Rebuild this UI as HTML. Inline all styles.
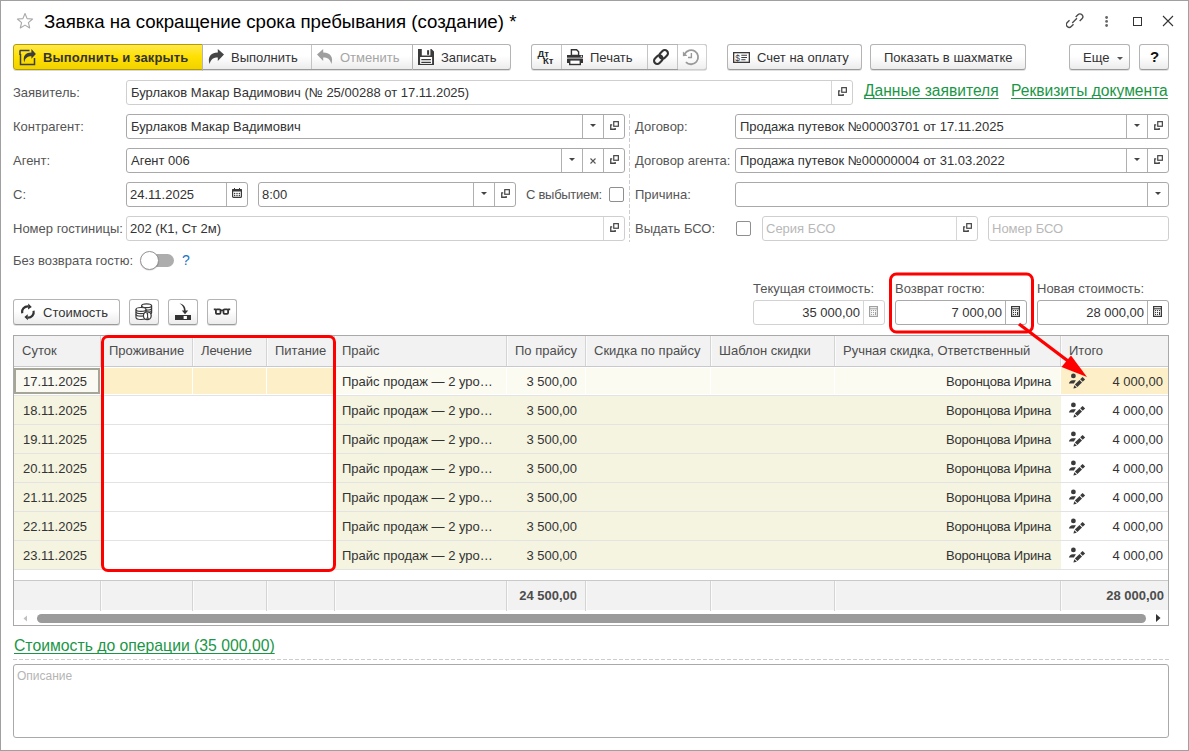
<!DOCTYPE html><html><head><meta charset="utf-8"><style>
*{margin:0;padding:0}
html,body{width:1189px;height:751px;overflow:hidden;background:#fff}
body{position:relative;font-family:"Liberation Sans", sans-serif}
.t{position:absolute;white-space:nowrap;line-height:0;height:0}
.btn{border:1px solid #b4b4b4;border-bottom-color:#9a9a9a;border-radius:3px;background:linear-gradient(#ffffff 0%,#ffffff 45%,#ececec 100%);box-shadow:0 1px 0 rgba(0,0,0,0.12)}
.inp{border:1px solid #a9a9a9;border-radius:3px;background:#fff}
.inpl{border:1px solid #cfcfcf;border-radius:3px;background:#fff}
</style></head><body>
<div style="position:absolute;left:0px;top:0px;width:1189px;height:751px;box-sizing:border-box;border:1px solid #a0a0a0;"></div>
<svg style="position:absolute;left:16px;top:12px;" width="18" height="18" viewBox="0 0 18 18"><path d="M9 1.5 L11.1 6.6 L16.6 7 L12.4 10.6 L13.7 16 L9 13.1 L4.3 16 L5.6 10.6 L1.4 7 L6.9 6.6 Z" fill="none" stroke="#a9a9a9" stroke-width="1.1" stroke-linejoin="round"/></svg>
<div class="t" style="left:44px;top:22.03px;font-size:18.67px;color:#000;font-weight:400;">Заявка на сокращение срока пребывания (создание) *</div>
<svg style="position:absolute;left:1066px;top:12px;" width="18" height="18" viewBox="0 0 18 18"><g fill="none" stroke="#4a4a4a" stroke-width="1.25" stroke-linecap="butt" transform="translate(8.6 8.6) scale(1.08) translate(-8.5 -8.5)"><path d="M3.8 8.2 L1.7 10.3 A2.6 2.6 0 0 0 5.4 14 L7.5 11.9"/><path d="M13.2 8.8 L15.3 6.7 A2.6 2.6 0 0 0 11.6 3 L9.5 5.1"/><path d="M6.3 10.7 L10.7 6.3"/></g></svg>
<svg style="position:absolute;left:1104px;top:15px;" width="6" height="13" viewBox="0 0 6 13"><g fill="#666"><circle cx="2.6" cy="2.5" r="1.4"/><circle cx="2.6" cy="6.4" r="1.4"/><circle cx="2.6" cy="10.5" r="1.4"/></g></svg>
<div style="position:absolute;left:1133px;top:17px;width:9px;height:9px;box-sizing:border-box;border:1.5px solid #333;"></div>
<svg style="position:absolute;left:1162px;top:15px;" width="12" height="12" viewBox="0 0 12 12"><path d="M1 1 L11 11 M11 1 L1 11" stroke="#333" stroke-width="1.1"/></svg>
<div style="position:absolute;left:13px;top:44px;width:190px;height:26px;box-sizing:border-box;border:1px solid #b39c00;border-radius:3px 0 0 3px;background:linear-gradient(#ffe94d 0%,#ffe000 50%,#f2d200 100%);box-shadow:0 1px 0 rgba(0,0,0,0.15)"></div>
<svg style="position:absolute;left:19px;top:49px;" width="18" height="17" viewBox="0 0 18 17"><path d="M1.5 5 V15.5 H15.5 V9" fill="none" stroke="#3d3d3d" stroke-width="1.5"/><path d="M0.75 1.5 H10.5" stroke="#3d3d3d" stroke-width="1.5"/><path d="M1 1.5 V6" stroke="#3d3d3d" stroke-width="1.5"/><path d="M5.3 13.5 C3.8 8 5.5 3.6 12.4 3.6 V0.1 L16.9 4.9 L12.4 9.7 V7.3 C8.5 7.3 6 9 5.3 13.5 Z" fill="#3d3d3d"/></svg>
<div class="t" style="left:43px;top:57.50px;font-size:13px;color:#333;font-weight:700;letter-spacing:0.12px;">Выполнить и закрыть</div>
<div class="btn" style="border-radius:0 3px 3px 0;position:absolute;left:202px;top:44px;width:309px;height:26px;box-sizing:border-box;"></div>
<div style="position:absolute;left:311px;top:45px;width:1px;height:24px;box-sizing:border-box;background:#c4c4c4"></div>
<div style="position:absolute;left:412px;top:44px;width:1px;height:26px;box-sizing:border-box;background:#b4b4b4"></div>
<svg style="position:absolute;left:207px;top:48px;" width="18" height="17" viewBox="0 0 18 17"><path d="M2.6 16 C0.5 10 3 4.6 10.8 4.6 V0.9 L17 6.5 L10.8 12.9 V9.6 C6.5 9.6 4 11 2.6 16 Z" fill="#454545"/></svg>
<div class="t" style="left:231px;top:57.50px;font-size:13px;color:#333;font-weight:400;">Выполнить</div>
<svg style="position:absolute;left:316px;top:48px;" width="18" height="17" viewBox="0 0 18 17"><path d="M15.4 16 C17.5 10 15 4.6 7.2 4.6 V0.9 L1 6.5 L7.2 12.9 V9.6 C11.5 9.6 14 11 15.4 16 Z" fill="#9e9e9e"/></svg>
<div class="t" style="left:340px;top:57.50px;font-size:13px;color:#a5a5a5;font-weight:400;">Отменить</div>
<svg style="position:absolute;left:418px;top:49px;" width="16" height="16" viewBox="0 0 16 16"><path d="M0 0 H3.8 V6.6 H12.4 V0 H13.4 L16 2.6 V16 H0 Z" fill="#3a3a3a"/><rect x="9.1" y="1.2" width="2" height="4.6" fill="#3a3a3a"/><rect x="2.1" y="8" width="12" height="6.9" fill="#fff"/><path d="M3.3 10.6 H12.9 M3.3 13.4 H12.9" stroke="#3a3a3a" stroke-width="1.1"/></svg>
<div class="t" style="left:441px;top:57.50px;font-size:13px;color:#333;font-weight:400;">Записать</div>
<div class="btn" style="position:absolute;left:531px;top:44px;width:176px;height:26px;box-sizing:border-box;"></div>
<div style="position:absolute;left:561px;top:45px;width:1px;height:24px;box-sizing:border-box;background:#c4c4c4"></div>
<div style="position:absolute;left:647px;top:45px;width:1px;height:24px;box-sizing:border-box;background:#c4c4c4"></div>
<div style="position:absolute;left:677px;top:45px;width:1px;height:24px;box-sizing:border-box;background:#c4c4c4"></div>
<div class="t" style="left:537.5px;top:53.71px;font-size:9.5px;color:#2a2a2a;font-weight:700;">Дт</div>
<div class="t" style="left:543px;top:61.21px;font-size:9.5px;color:#2a2a2a;font-weight:700;">Кт</div>
<svg style="position:absolute;left:566px;top:48px;" width="18" height="18" viewBox="0 0 18 18"><path d="M5.4 1.7 H10.6 L12.6 3.7 V7.5 H5.4 Z" fill="#fff" stroke="#333" stroke-width="1.4"/><rect x="1" y="7" width="16" height="2.7" fill="#333"/><circle cx="15.3" cy="8.35" r="0.75" fill="#fff"/><rect x="1" y="10.4" width="16" height="4.6" rx="0.6" fill="#333"/><rect x="3.7" y="11.9" width="10.6" height="4.6" fill="#fff" stroke="#333" stroke-width="1.4"/></svg>
<div class="t" style="left:590px;top:57.50px;font-size:13px;color:#333;font-weight:400;">Печать</div>
<svg style="position:absolute;left:652px;top:48px;" width="18" height="18" viewBox="0 0 18 18"><g fill="none" stroke="#333" stroke-width="2.1" transform="rotate(-45 9 9)"><rect x="0.5" y="5.8" width="9.5" height="6.4" rx="3.2"/><rect x="8" y="5.8" width="9.5" height="6.4" rx="3.2"/></g></svg>
<div style="position:absolute;left:678px;top:44px;width:29px;height:26px;box-sizing:border-box;border:1px solid #cfcfcf;border-left:none;border-radius:0 3px 3px 0;background:linear-gradient(#ffffff 45%,#efefef 100%)"></div>
<svg style="position:absolute;left:682px;top:48px;" width="18" height="18" viewBox="0 0 18 18"><path d="M3.9 14.1 A7.1 7.1 0 1 0 2.7 5.9" fill="none" stroke="#9a9a9a" stroke-width="1.8"/><path d="M0.9 3.4 L0.9 8.3 L5.4 7.7 Z" fill="#9a9a9a"/><path d="M9.4 5.1 V9.5 H6" fill="none" stroke="#9a9a9a" stroke-width="1.4"/></svg>
<div class="btn" style="position:absolute;left:727px;top:44px;width:135px;height:26px;box-sizing:border-box;"></div>
<svg style="position:absolute;left:733px;top:52px;" width="17" height="11" viewBox="0 0 17 11"><rect x="0.65" y="0.65" width="15.7" height="9.7" fill="none" stroke="#3a3a3a" stroke-width="1.3"/><text x="2.3" y="8.6" font-family="Liberation Sans" font-size="8.5" fill="#3a3a3a">$</text><path d="M8.3 3.2 H14 M8.3 5.5 H14 M8.3 7.8 H12.5" stroke="#3a3a3a" stroke-width="1.1"/></svg>
<div class="t" style="left:757px;top:57.50px;font-size:13px;color:#333;font-weight:400;">Счет на оплату</div>
<div class="btn" style="position:absolute;left:870px;top:44px;width:156px;height:26px;box-sizing:border-box;"></div>
<div class="t" style="left:884px;top:57.50px;font-size:13px;color:#333;font-weight:400;">Показать в шахматке</div>
<div class="btn" style="position:absolute;left:1069px;top:44px;width:61px;height:26px;box-sizing:border-box;"></div>
<div class="t" style="left:1083px;top:57.50px;font-size:13px;color:#333;font-weight:400;">Еще</div>
<svg style="position:absolute;left:1117px;top:57px;" width="6" height="4" viewBox="0 0 6 4"><path d="M0 0 H6 L3 3 Z" fill="#555"/></svg>
<div class="btn" style="position:absolute;left:1139px;top:44px;width:30px;height:26px;box-sizing:border-box;"></div>
<div class="t" style="left:1150px;top:57.30px;font-size:15px;color:#111;font-weight:700;">?</div>
<div class="t" style="left:13px;top:92.50px;font-size:13px;color:#555555;font-weight:400;">Заявитель:</div>
<div style="position:absolute;left:126px;top:80px;width:727px;height:25px;box-sizing:border-box;border:1px solid #cfcfcf;border-radius:3px;background:#fff"></div>
<div style="position:absolute;left:831px;top:81px;width:1px;height:23px;box-sizing:border-box;background:#d6d6d6"></div>
<svg style="position:absolute;left:838px;top:87px;" width="10" height="10" viewBox="0 0 10 10"><path d="M2.2 3.8 H0.75 V8.25 H5.2 V7" fill="none" stroke="#444" stroke-width="1.3"/><rect x="3.75" y="0.65" width="4.6" height="4.6" fill="none" stroke="#444" stroke-width="1.2"/></svg>
<div class="t" style="left:131px;top:92.50px;font-size:13px;color:#333;font-weight:400;">Бурлаков Макар Вадимович (№ 25/00288 от 17.11.2025)</div>
<div class="t" style="left:864px;top:90.59px;font-size:15.6px;color:#1a9646;font-weight:400;text-decoration:underline;text-decoration-skip-ink:none;text-underline-offset:1.5px;">Данные заявителя</div>
<div class="t" style="left:1011px;top:90.59px;font-size:15.6px;color:#1a9646;font-weight:400;text-decoration:underline;text-decoration-skip-ink:none;text-underline-offset:1.5px;">Реквизиты документа</div>
<div class="t" style="left:13px;top:126.50px;font-size:13px;color:#555555;font-weight:400;">Контрагент:</div>
<div style="position:absolute;left:126px;top:114px;width:499px;height:25px;box-sizing:border-box;border:1px solid #a9a9a9;border-radius:3px;background:#fff"></div>
<div style="position:absolute;left:582px;top:115px;width:1px;height:23px;box-sizing:border-box;background:#b0b0b0"></div>
<div style="position:absolute;left:603px;top:115px;width:1px;height:23px;box-sizing:border-box;background:#b0b0b0"></div>
<svg style="position:absolute;left:590px;top:124px;" width="6" height="4" viewBox="0 0 6 4"><path d="M0 0 H6 L3 3 Z" fill="#444"/></svg>
<svg style="position:absolute;left:610px;top:121px;" width="10" height="10" viewBox="0 0 10 10"><path d="M2.2 3.8 H0.75 V8.25 H5.2 V7" fill="none" stroke="#444" stroke-width="1.3"/><rect x="3.75" y="0.65" width="4.6" height="4.6" fill="none" stroke="#444" stroke-width="1.2"/></svg>
<div class="t" style="left:131px;top:126.50px;font-size:13px;color:#333;font-weight:400;">Бурлаков Макар Вадимович</div>
<div class="t" style="left:635px;top:126.50px;font-size:13px;color:#555555;font-weight:400;">Договор:</div>
<div style="position:absolute;left:735px;top:114px;width:434px;height:25px;box-sizing:border-box;border:1px solid #a9a9a9;border-radius:3px;background:#fff"></div>
<div style="position:absolute;left:1126px;top:115px;width:1px;height:23px;box-sizing:border-box;background:#b0b0b0"></div>
<div style="position:absolute;left:1147px;top:115px;width:1px;height:23px;box-sizing:border-box;background:#b0b0b0"></div>
<svg style="position:absolute;left:1134px;top:124px;" width="6" height="4" viewBox="0 0 6 4"><path d="M0 0 H6 L3 3 Z" fill="#444"/></svg>
<svg style="position:absolute;left:1154px;top:121px;" width="10" height="10" viewBox="0 0 10 10"><path d="M2.2 3.8 H0.75 V8.25 H5.2 V7" fill="none" stroke="#444" stroke-width="1.3"/><rect x="3.75" y="0.65" width="4.6" height="4.6" fill="none" stroke="#444" stroke-width="1.2"/></svg>
<div class="t" style="left:740px;top:126.50px;font-size:13px;color:#333;font-weight:400;">Продажа путевок №00003701 от 17.11.2025</div>
<div class="t" style="left:13px;top:160.50px;font-size:13px;color:#555555;font-weight:400;">Агент:</div>
<div style="position:absolute;left:126px;top:148px;width:499px;height:25px;box-sizing:border-box;border:1px solid #a9a9a9;border-radius:3px;background:#fff"></div>
<div style="position:absolute;left:561px;top:149px;width:1px;height:23px;box-sizing:border-box;background:#b0b0b0"></div>
<div style="position:absolute;left:582px;top:149px;width:1px;height:23px;box-sizing:border-box;background:#b0b0b0"></div>
<div style="position:absolute;left:603px;top:149px;width:1px;height:23px;box-sizing:border-box;background:#b0b0b0"></div>
<svg style="position:absolute;left:569px;top:158px;" width="6" height="4" viewBox="0 0 6 4"><path d="M0 0 H6 L3 3 Z" fill="#444"/></svg>
<svg style="position:absolute;left:590px;top:158px;" width="6" height="6" viewBox="0 0 6 6"><path d="M0.5 0.5 L5.5 5.5 M5.5 0.5 L0.5 5.5" stroke="#555" stroke-width="1.1"/></svg>
<svg style="position:absolute;left:610px;top:155px;" width="10" height="10" viewBox="0 0 10 10"><path d="M2.2 3.8 H0.75 V8.25 H5.2 V7" fill="none" stroke="#444" stroke-width="1.3"/><rect x="3.75" y="0.65" width="4.6" height="4.6" fill="none" stroke="#444" stroke-width="1.2"/></svg>
<div class="t" style="left:131px;top:160.50px;font-size:13px;color:#333;font-weight:400;">Агент 006</div>
<div class="t" style="left:635px;top:160.50px;font-size:13px;color:#555555;font-weight:400;">Договор агента:</div>
<div style="position:absolute;left:735px;top:148px;width:434px;height:25px;box-sizing:border-box;border:1px solid #a9a9a9;border-radius:3px;background:#fff"></div>
<div style="position:absolute;left:1126px;top:149px;width:1px;height:23px;box-sizing:border-box;background:#b0b0b0"></div>
<div style="position:absolute;left:1147px;top:149px;width:1px;height:23px;box-sizing:border-box;background:#b0b0b0"></div>
<svg style="position:absolute;left:1134px;top:158px;" width="6" height="4" viewBox="0 0 6 4"><path d="M0 0 H6 L3 3 Z" fill="#444"/></svg>
<svg style="position:absolute;left:1154px;top:155px;" width="10" height="10" viewBox="0 0 10 10"><path d="M2.2 3.8 H0.75 V8.25 H5.2 V7" fill="none" stroke="#444" stroke-width="1.3"/><rect x="3.75" y="0.65" width="4.6" height="4.6" fill="none" stroke="#444" stroke-width="1.2"/></svg>
<div class="t" style="left:740px;top:160.50px;font-size:13px;color:#333;font-weight:400;">Продажа путевок №00000004 от 31.03.2022</div>
<div class="t" style="left:13px;top:194.50px;font-size:13px;color:#555555;font-weight:400;">С:</div>
<div style="position:absolute;left:126px;top:182px;width:122px;height:25px;box-sizing:border-box;border:1px solid #a9a9a9;border-radius:3px;background:#fff"></div>
<div style="position:absolute;left:226px;top:183px;width:1px;height:23px;box-sizing:border-box;background:#b0b0b0"></div>
<svg style="position:absolute;left:232px;top:188px;" width="10" height="10" viewBox="0 0 10 10"><rect x="0.6" y="1.6" width="8.8" height="7.8" rx="1" fill="none" stroke="#3a3a3a" stroke-width="1.2"/><rect x="0" y="1" width="10" height="2.6" rx="0.8" fill="#3a3a3a"/><path d="M2.5 0 V1.5 M7.5 0 V1.5" stroke="#3a3a3a" stroke-width="1"/><g fill="#3a3a3a"><circle cx="2.6" cy="5.4" r="0.75"/><circle cx="5" cy="5.4" r="0.75"/><circle cx="7.4" cy="5.4" r="0.75"/><circle cx="2.6" cy="7.5" r="0.75"/><circle cx="5" cy="7.5" r="0.75"/><circle cx="7.4" cy="7.5" r="0.75"/></g></svg>
<div class="t" style="left:130px;top:194.50px;font-size:13px;color:#333;font-weight:400;">24.11.2025</div>
<div style="position:absolute;left:258px;top:182px;width:258px;height:25px;box-sizing:border-box;border:1px solid #a9a9a9;border-radius:3px;background:#fff"></div>
<div style="position:absolute;left:473px;top:183px;width:1px;height:23px;box-sizing:border-box;background:#b0b0b0"></div>
<div style="position:absolute;left:494px;top:183px;width:1px;height:23px;box-sizing:border-box;background:#b0b0b0"></div>
<svg style="position:absolute;left:481px;top:192px;" width="6" height="4" viewBox="0 0 6 4"><path d="M0 0 H6 L3 3 Z" fill="#444"/></svg>
<svg style="position:absolute;left:501px;top:189px;" width="10" height="10" viewBox="0 0 10 10"><path d="M2.2 3.8 H0.75 V8.25 H5.2 V7" fill="none" stroke="#444" stroke-width="1.3"/><rect x="3.75" y="0.65" width="4.6" height="4.6" fill="none" stroke="#444" stroke-width="1.2"/></svg>
<div class="t" style="left:262px;top:194.50px;font-size:13px;color:#333;font-weight:400;">8:00</div>
<div class="t" style="left:526px;top:194.50px;font-size:13px;color:#555555;font-weight:400;letter-spacing:-0.28px;">С выбытием:</div>
<div style="position:absolute;left:609px;top:187px;width:15px;height:15px;box-sizing:border-box;border:1px solid #8f8f8f;border-radius:2px;background:#fff"></div>
<div class="t" style="left:635px;top:194.50px;font-size:13px;color:#555555;font-weight:400;">Причина:</div>
<div style="position:absolute;left:735px;top:182px;width:434px;height:25px;box-sizing:border-box;border:1px solid #a9a9a9;border-radius:3px;background:#fff"></div>
<div style="position:absolute;left:1147px;top:183px;width:1px;height:23px;box-sizing:border-box;background:#b0b0b0"></div>
<svg style="position:absolute;left:1155px;top:192px;" width="6" height="4" viewBox="0 0 6 4"><path d="M0 0 H6 L3 3 Z" fill="#444"/></svg>
<div class="t" style="left:13px;top:228.50px;font-size:13px;color:#555555;font-weight:400;">Номер гостиницы:</div>
<div style="position:absolute;left:126px;top:216px;width:499px;height:25px;box-sizing:border-box;border:1px solid #cfcfcf;border-radius:3px;background:#fff"></div>
<div style="position:absolute;left:603px;top:217px;width:1px;height:23px;box-sizing:border-box;background:#d6d6d6"></div>
<svg style="position:absolute;left:610px;top:223px;" width="10" height="10" viewBox="0 0 10 10"><path d="M2.2 3.8 H0.75 V8.25 H5.2 V7" fill="none" stroke="#444" stroke-width="1.3"/><rect x="3.75" y="0.65" width="4.6" height="4.6" fill="none" stroke="#444" stroke-width="1.2"/></svg>
<div class="t" style="left:130px;top:228.50px;font-size:13px;color:#333;font-weight:400;">202 (К1, Ст 2м)</div>
<div class="t" style="left:635px;top:228.50px;font-size:13px;color:#555555;font-weight:400;">Выдать БСО:</div>
<div style="position:absolute;left:736px;top:221px;width:15px;height:15px;box-sizing:border-box;border:1px solid #8f8f8f;border-radius:2px;background:#fff"></div>
<div style="position:absolute;left:762px;top:216px;width:216px;height:25px;box-sizing:border-box;border:1px solid #cfcfcf;border-radius:3px;background:#fff"></div>
<div style="position:absolute;left:956px;top:217px;width:1px;height:23px;box-sizing:border-box;background:#d6d6d6"></div>
<svg style="position:absolute;left:963px;top:223px;" width="10" height="10" viewBox="0 0 10 10"><path d="M2.2 3.8 H0.75 V8.25 H5.2 V7" fill="none" stroke="#444" stroke-width="1.3"/><rect x="3.75" y="0.65" width="4.6" height="4.6" fill="none" stroke="#444" stroke-width="1.2"/></svg>
<div class="t" style="left:766px;top:228.50px;font-size:13px;color:#b8b8b8;font-weight:400;">Серия БСО</div>
<div style="position:absolute;left:988px;top:216px;width:181px;height:25px;box-sizing:border-box;border:1px solid #cfcfcf;border-radius:3px;background:#fff"></div>
<div class="t" style="left:992px;top:228.50px;font-size:13px;color:#b8b8b8;font-weight:400;">Номер БСО</div>
<svg style="position:absolute;left:629px;top:114px;" width="1" height="128" viewBox="0 0 1 128"><path d="M0.5 0 V128" stroke="#cdcdcd" stroke-width="1" stroke-dasharray="4 2"/></svg>
<div class="t" style="left:13px;top:260.50px;font-size:13px;color:#555555;font-weight:400;">Без возврата гостю:</div>
<div style="position:absolute;left:147px;top:254px;width:27px;height:13px;box-sizing:border-box;border-radius:6.5px;background:#adadad"></div>
<div style="position:absolute;left:140px;top:251px;width:19px;height:19px;box-sizing:border-box;border-radius:50%;background:#fff;border:1px solid #959595;box-shadow:0 0.5px 1px rgba(0,0,0,.2)"></div>
<div class="t" style="left:182px;top:260.15px;font-size:14px;color:#1a73c6;font-weight:400;">?</div>
<div class="t" style="left:753px;top:288.50px;font-size:13px;color:#555555;font-weight:400;">Текущая стоимость:</div>
<div class="t" style="left:895px;top:288.50px;font-size:13px;color:#555555;font-weight:400;">Возврат гостю:</div>
<div class="t" style="left:1037px;top:288.50px;font-size:13px;color:#555555;font-weight:400;">Новая стоимость:</div>
<div style="position:absolute;left:753px;top:300px;width:132px;height:25px;box-sizing:border-box;border:1px solid #d2d2d2;border-radius:3px;background:#fff"></div>
<div style="position:absolute;left:863px;top:301px;width:1px;height:23px;box-sizing:border-box;background:#d6d6d6"></div>
<svg style="position:absolute;left:869px;top:306px;" width="9" height="11" viewBox="0 0 9 11"><rect x="0.6" y="0.6" width="7.8" height="9.8" fill="none" stroke="#a0a0a0" stroke-width="1.2"/><path d="M0.6 2.8 H8.4" stroke="#a0a0a0" stroke-width="1.1"/><g fill="#a0a0a0"><rect x="2" y="4" width="1.1" height="1.1"/><rect x="4" y="4" width="1.1" height="1.1"/><rect x="6" y="4" width="1.1" height="1.1"/><rect x="2" y="6" width="1.1" height="1.1"/><rect x="4" y="6" width="1.1" height="1.1"/><rect x="2" y="8" width="1.1" height="1.1"/><rect x="4" y="8" width="1.1" height="1.1"/><rect x="6" y="6" width="1.1" height="3.1"/></g></svg>
<div class="t" style="right:329px;top:312.50px;font-size:13px;color:#333;font-weight:400;">35 000,00</div>
<div style="position:absolute;left:895px;top:300px;width:132px;height:25px;box-sizing:border-box;border:1px solid #a9a9a9;border-radius:3px;background:#fff"></div>
<div style="position:absolute;left:1005px;top:301px;width:1px;height:23px;box-sizing:border-box;background:#b0b0b0"></div>
<svg style="position:absolute;left:1011px;top:306px;" width="9" height="11" viewBox="0 0 9 11"><rect x="0.6" y="0.6" width="7.8" height="9.8" fill="none" stroke="#3a3a3a" stroke-width="1.2"/><path d="M0.6 2.8 H8.4" stroke="#3a3a3a" stroke-width="1.1"/><g fill="#3a3a3a"><rect x="2" y="4" width="1.1" height="1.1"/><rect x="4" y="4" width="1.1" height="1.1"/><rect x="6" y="4" width="1.1" height="1.1"/><rect x="2" y="6" width="1.1" height="1.1"/><rect x="4" y="6" width="1.1" height="1.1"/><rect x="2" y="8" width="1.1" height="1.1"/><rect x="4" y="8" width="1.1" height="1.1"/><rect x="6" y="6" width="1.1" height="3.1"/></g></svg>
<div class="t" style="right:187px;top:312.50px;font-size:13px;color:#333;font-weight:400;">7 000,00</div>
<div style="position:absolute;left:1037px;top:300px;width:132px;height:25px;box-sizing:border-box;border:1px solid #a9a9a9;border-radius:3px;background:#fff"></div>
<div style="position:absolute;left:1147px;top:301px;width:1px;height:23px;box-sizing:border-box;background:#b0b0b0"></div>
<svg style="position:absolute;left:1153px;top:306px;" width="9" height="11" viewBox="0 0 9 11"><rect x="0.6" y="0.6" width="7.8" height="9.8" fill="none" stroke="#3a3a3a" stroke-width="1.2"/><path d="M0.6 2.8 H8.4" stroke="#3a3a3a" stroke-width="1.1"/><g fill="#3a3a3a"><rect x="2" y="4" width="1.1" height="1.1"/><rect x="4" y="4" width="1.1" height="1.1"/><rect x="6" y="4" width="1.1" height="1.1"/><rect x="2" y="6" width="1.1" height="1.1"/><rect x="4" y="6" width="1.1" height="1.1"/><rect x="2" y="8" width="1.1" height="1.1"/><rect x="4" y="8" width="1.1" height="1.1"/><rect x="6" y="6" width="1.1" height="3.1"/></g></svg>
<div class="t" style="right:45px;top:312.50px;font-size:13px;color:#333;font-weight:400;">28 000,00</div>
<div class="btn" style="position:absolute;left:13px;top:299px;width:107px;height:26px;box-sizing:border-box;"></div>
<svg style="position:absolute;left:21px;top:303px;" width="15" height="18" viewBox="0 0 15 18"><g fill="none" stroke="#333" stroke-width="2.2"><path d="M1.3 10.3 A5.7 5.7 0 0 1 7.2 3.3"/><path d="M12.6 7.8 A5.7 5.7 0 0 1 6.8 14.7"/></g><path d="M7.3 0.6 L10.8 4 L7 6.6 Z M6.7 11.2 L3.4 14 L6.9 17.2 Z" fill="#333"/></svg>
<div class="t" style="left:43px;top:312.50px;font-size:13px;color:#333;font-weight:400;">Стоимость</div>
<div class="btn" style="position:absolute;left:129px;top:299px;width:30px;height:26px;box-sizing:border-box;"></div>
<svg style="position:absolute;left:135px;top:303px;" width="18" height="18" viewBox="0 0 18 18"><g stroke="#3a3a3a" stroke-width="1.2" fill="#fff"><path d="M6.6 2.8 a5 1.9 0 0 1 10 0 V9.8 a5 1.9 0 0 1 -10 0 Z"/><path d="M6.6 2.8 a5 1.9 0 0 0 10 0 M6.6 5.2 a5 1.9 0 0 0 10 0 M6.6 7.5 a5 1.9 0 0 0 10 0" fill="none"/><path d="M1 6.4 a5 1.9 0 0 1 10 0 V14.6 a5 1.9 0 0 1 -10 0 Z"/><path d="M1 6.4 a5 1.9 0 0 0 10 0 M1 8.8 a5 1.9 0 0 0 10 0 M1 11.2 a5 1.9 0 0 0 10 0" fill="none"/><circle cx="12.3" cy="12.8" r="3.9" stroke-width="1.3"/></g><path d="M11.6 11 L12.6 10.3 V15.2 M11.3 15.2 H13.9" stroke="#3a3a3a" stroke-width="1.1" fill="none"/></svg>
<div class="btn" style="position:absolute;left:168px;top:299px;width:30px;height:26px;box-sizing:border-box;"></div>
<svg style="position:absolute;left:174px;top:303px;" width="18" height="18" viewBox="0 0 18 18"><path d="M5.5 0.5 C9.5 1 11.5 3.5 11.6 7.5 H14.2 L11 11.2 L7.8 7.5 H10 C9.8 4.5 8.5 2 5.5 0.5 Z" fill="#333"/><rect x="1" y="12" width="16" height="5" fill="#333"/><rect x="9.6" y="13" width="3.3" height="3" fill="#fff"/></svg>
<div class="btn" style="position:absolute;left:207px;top:299px;width:30px;height:26px;box-sizing:border-box;"></div>
<svg style="position:absolute;left:213px;top:307px;" width="18" height="9" viewBox="0 0 18 9"><g fill="none" stroke="#333" stroke-width="1.8"><rect x="2.9" y="2.4" width="4.6" height="4.4" rx="1"/><rect x="10.5" y="2.4" width="4.6" height="4.4" rx="1"/><path d="M7.5 3.4 H10.5 M0.8 2.4 H2.9 M15.1 2.4 H17.2"/></g></svg>
<div style="position:absolute;left:13px;top:335px;width:1156px;height:291px;box-sizing:border-box;border:1px solid #a9a9a9;background:#fff"></div>
<div style="position:absolute;left:14px;top:336px;width:1154px;height:30px;box-sizing:border-box;background:#f2f2f2"></div>
<div style="position:absolute;left:14px;top:366px;width:1154px;height:1px;box-sizing:border-box;background:#c9c9c9"></div>
<div style="position:absolute;left:100px;top:336px;width:1px;height:30px;box-sizing:border-box;background:#d4d4d4"></div>
<div style="position:absolute;left:101px;top:336px;width:1px;height:30px;box-sizing:border-box;background:#fbfbfb"></div>
<div style="position:absolute;left:192px;top:336px;width:1px;height:30px;box-sizing:border-box;background:#d4d4d4"></div>
<div style="position:absolute;left:193px;top:336px;width:1px;height:30px;box-sizing:border-box;background:#fbfbfb"></div>
<div style="position:absolute;left:266px;top:336px;width:1px;height:30px;box-sizing:border-box;background:#d4d4d4"></div>
<div style="position:absolute;left:267px;top:336px;width:1px;height:30px;box-sizing:border-box;background:#fbfbfb"></div>
<div style="position:absolute;left:334px;top:336px;width:1px;height:30px;box-sizing:border-box;background:#d4d4d4"></div>
<div style="position:absolute;left:335px;top:336px;width:1px;height:30px;box-sizing:border-box;background:#fbfbfb"></div>
<div style="position:absolute;left:506px;top:336px;width:1px;height:30px;box-sizing:border-box;background:#d4d4d4"></div>
<div style="position:absolute;left:507px;top:336px;width:1px;height:30px;box-sizing:border-box;background:#fbfbfb"></div>
<div style="position:absolute;left:585px;top:336px;width:1px;height:30px;box-sizing:border-box;background:#d4d4d4"></div>
<div style="position:absolute;left:586px;top:336px;width:1px;height:30px;box-sizing:border-box;background:#fbfbfb"></div>
<div style="position:absolute;left:710px;top:336px;width:1px;height:30px;box-sizing:border-box;background:#d4d4d4"></div>
<div style="position:absolute;left:711px;top:336px;width:1px;height:30px;box-sizing:border-box;background:#fbfbfb"></div>
<div style="position:absolute;left:834px;top:336px;width:1px;height:30px;box-sizing:border-box;background:#d4d4d4"></div>
<div style="position:absolute;left:835px;top:336px;width:1px;height:30px;box-sizing:border-box;background:#fbfbfb"></div>
<div style="position:absolute;left:1060px;top:336px;width:1px;height:30px;box-sizing:border-box;background:#d4d4d4"></div>
<div style="position:absolute;left:1061px;top:336px;width:1px;height:30px;box-sizing:border-box;background:#fbfbfb"></div>
<div class="t" style="left:22px;top:350.50px;font-size:13px;color:#4d4d4d;font-weight:400;">Суток</div>
<div class="t" style="left:109px;top:350.50px;font-size:13px;color:#4d4d4d;font-weight:400;">Проживание</div>
<div class="t" style="left:201px;top:350.50px;font-size:13px;color:#4d4d4d;font-weight:400;">Лечение</div>
<div class="t" style="left:275px;top:350.50px;font-size:13px;color:#4d4d4d;font-weight:400;">Питание</div>
<div class="t" style="left:342px;top:350.50px;font-size:13px;color:#4d4d4d;font-weight:400;">Прайс</div>
<div class="t" style="left:515px;top:350.50px;font-size:13px;color:#4d4d4d;font-weight:400;">По прайсу</div>
<div class="t" style="left:594px;top:350.50px;font-size:13px;color:#4d4d4d;font-weight:400;">Скидка по прайсу</div>
<div class="t" style="left:719px;top:350.50px;font-size:13px;color:#4d4d4d;font-weight:400;">Шаблон скидки</div>
<div class="t" style="left:843px;top:350.50px;font-size:13px;color:#4d4d4d;font-weight:400;">Ручная скидка, Ответственный</div>
<div class="t" style="left:1069px;top:350.50px;font-size:13px;color:#4d4d4d;font-weight:400;">Итого</div>
<div style="position:absolute;left:14px;top:367px;width:87px;height:28px;box-sizing:border-box;background:#fbfbf2"></div>
<div style="position:absolute;left:101px;top:367px;width:92px;height:28px;box-sizing:border-box;background:#fdf0c8"></div>
<div style="position:absolute;left:100px;top:367px;width:1px;height:28px;box-sizing:border-box;background:#ffffff"></div>
<div style="position:absolute;left:193px;top:367px;width:74px;height:28px;box-sizing:border-box;background:#fdf0c8"></div>
<div style="position:absolute;left:192px;top:367px;width:1px;height:28px;box-sizing:border-box;background:#ffffff"></div>
<div style="position:absolute;left:267px;top:367px;width:68px;height:28px;box-sizing:border-box;background:#fdf0c8"></div>
<div style="position:absolute;left:266px;top:367px;width:1px;height:28px;box-sizing:border-box;background:#ffffff"></div>
<div style="position:absolute;left:335px;top:367px;width:172px;height:28px;box-sizing:border-box;background:#fbfbf2"></div>
<div style="position:absolute;left:334px;top:367px;width:1px;height:28px;box-sizing:border-box;background:#ffffff"></div>
<div style="position:absolute;left:507px;top:367px;width:79px;height:28px;box-sizing:border-box;background:#fbfbf2"></div>
<div style="position:absolute;left:506px;top:367px;width:1px;height:28px;box-sizing:border-box;background:#ffffff"></div>
<div style="position:absolute;left:586px;top:367px;width:125px;height:28px;box-sizing:border-box;background:#fbfbf2"></div>
<div style="position:absolute;left:585px;top:367px;width:1px;height:28px;box-sizing:border-box;background:#ffffff"></div>
<div style="position:absolute;left:711px;top:367px;width:124px;height:28px;box-sizing:border-box;background:#fbfbf2"></div>
<div style="position:absolute;left:710px;top:367px;width:1px;height:28px;box-sizing:border-box;background:#ffffff"></div>
<div style="position:absolute;left:835px;top:367px;width:226px;height:28px;box-sizing:border-box;background:#fbfbf2"></div>
<div style="position:absolute;left:834px;top:367px;width:1px;height:28px;box-sizing:border-box;background:#ffffff"></div>
<div style="position:absolute;left:1061px;top:367px;width:107px;height:28px;box-sizing:border-box;background:#fdf0c8"></div>
<div style="position:absolute;left:1060px;top:367px;width:1px;height:28px;box-sizing:border-box;background:#ffffff"></div>
<div style="position:absolute;left:14px;top:395px;width:1154px;height:1px;box-sizing:border-box;background:#e3e3e3"></div>
<div style="position:absolute;left:14px;top:367px;width:1154px;height:1px;box-sizing:border-box;background:#ffffff"></div>
<div style="position:absolute;left:14px;top:394px;width:1154px;height:1px;box-sizing:border-box;background:#ffffff"></div>
<div style="position:absolute;left:14px;top:368px;width:86px;height:26px;box-sizing:border-box;border:2px solid #a5a697;background:#fafaf2"></div>
<div class="t" style="left:23px;top:381.50px;font-size:13px;color:#333;font-weight:400;">17.11.2025</div>
<div class="t" style="left:342px;top:381.50px;font-size:13px;color:#333;font-weight:400;">Прайс продаж — 2 уро…</div>
<div class="t" style="right:612px;top:381.50px;font-size:13px;color:#333;font-weight:400;">3 500,00</div>
<div class="t" style="right:138px;top:381.50px;font-size:13px;color:#333;font-weight:400;letter-spacing:-0.2px;">Воронцова Ирина</div>
<svg style="position:absolute;left:1068px;top:373px;" width="19" height="17" viewBox="0 0 19 17"><g fill="#3a3a3a"><circle cx="5.4" cy="2.9" r="2.4"/><path d="M0.9 10.6 C1.3 8.6 2.6 7.3 4.8 7.3 H7.9 L5.9 10.6 Z"/><path d="M5.4 15.6 L6.3 12.2 L8.8 14.7 Z"/><path d="M6.9 11.6 L9.4 14.1 L14 9.5 L11.5 7 Z"/><path d="M12.2 6.3 L14.7 8.8 L17.1 6.4 L14.6 3.9 Z"/></g></svg>
<div class="t" style="right:26px;top:381.50px;font-size:13px;color:#333;font-weight:400;">4 000,00</div>
<div style="position:absolute;left:14px;top:396px;width:87px;height:28px;box-sizing:border-box;background:#f4f4e0"></div>
<div style="position:absolute;left:101px;top:396px;width:92px;height:28px;box-sizing:border-box;background:#ffffff"></div>
<div style="position:absolute;left:193px;top:396px;width:74px;height:28px;box-sizing:border-box;background:#ffffff"></div>
<div style="position:absolute;left:267px;top:396px;width:68px;height:28px;box-sizing:border-box;background:#ffffff"></div>
<div style="position:absolute;left:335px;top:396px;width:172px;height:28px;box-sizing:border-box;background:#f4f4e0"></div>
<div style="position:absolute;left:507px;top:396px;width:79px;height:28px;box-sizing:border-box;background:#f4f4e0"></div>
<div style="position:absolute;left:586px;top:396px;width:125px;height:28px;box-sizing:border-box;background:#f4f4e0"></div>
<div style="position:absolute;left:711px;top:396px;width:124px;height:28px;box-sizing:border-box;background:#f4f4e0"></div>
<div style="position:absolute;left:835px;top:396px;width:226px;height:28px;box-sizing:border-box;background:#f4f4e0"></div>
<div style="position:absolute;left:1061px;top:396px;width:107px;height:28px;box-sizing:border-box;background:#ffffff"></div>
<div style="position:absolute;left:14px;top:424px;width:1154px;height:1px;box-sizing:border-box;background:#e3e3e3"></div>
<div class="t" style="left:23px;top:410.50px;font-size:13px;color:#333;font-weight:400;">18.11.2025</div>
<div class="t" style="left:342px;top:410.50px;font-size:13px;color:#333;font-weight:400;">Прайс продаж — 2 уро…</div>
<div class="t" style="right:612px;top:410.50px;font-size:13px;color:#333;font-weight:400;">3 500,00</div>
<div class="t" style="right:138px;top:410.50px;font-size:13px;color:#333;font-weight:400;letter-spacing:-0.2px;">Воронцова Ирина</div>
<svg style="position:absolute;left:1068px;top:402px;" width="19" height="17" viewBox="0 0 19 17"><g fill="#3a3a3a"><circle cx="5.4" cy="2.9" r="2.4"/><path d="M0.9 10.6 C1.3 8.6 2.6 7.3 4.8 7.3 H7.9 L5.9 10.6 Z"/><path d="M5.4 15.6 L6.3 12.2 L8.8 14.7 Z"/><path d="M6.9 11.6 L9.4 14.1 L14 9.5 L11.5 7 Z"/><path d="M12.2 6.3 L14.7 8.8 L17.1 6.4 L14.6 3.9 Z"/></g></svg>
<div class="t" style="right:26px;top:410.50px;font-size:13px;color:#333;font-weight:400;">4 000,00</div>
<div style="position:absolute;left:14px;top:425px;width:87px;height:28px;box-sizing:border-box;background:#f4f4e0"></div>
<div style="position:absolute;left:101px;top:425px;width:92px;height:28px;box-sizing:border-box;background:#ffffff"></div>
<div style="position:absolute;left:193px;top:425px;width:74px;height:28px;box-sizing:border-box;background:#ffffff"></div>
<div style="position:absolute;left:267px;top:425px;width:68px;height:28px;box-sizing:border-box;background:#ffffff"></div>
<div style="position:absolute;left:335px;top:425px;width:172px;height:28px;box-sizing:border-box;background:#f4f4e0"></div>
<div style="position:absolute;left:507px;top:425px;width:79px;height:28px;box-sizing:border-box;background:#f4f4e0"></div>
<div style="position:absolute;left:586px;top:425px;width:125px;height:28px;box-sizing:border-box;background:#f4f4e0"></div>
<div style="position:absolute;left:711px;top:425px;width:124px;height:28px;box-sizing:border-box;background:#f4f4e0"></div>
<div style="position:absolute;left:835px;top:425px;width:226px;height:28px;box-sizing:border-box;background:#f4f4e0"></div>
<div style="position:absolute;left:1061px;top:425px;width:107px;height:28px;box-sizing:border-box;background:#ffffff"></div>
<div style="position:absolute;left:14px;top:453px;width:1154px;height:1px;box-sizing:border-box;background:#e3e3e3"></div>
<div class="t" style="left:23px;top:439.50px;font-size:13px;color:#333;font-weight:400;">19.11.2025</div>
<div class="t" style="left:342px;top:439.50px;font-size:13px;color:#333;font-weight:400;">Прайс продаж — 2 уро…</div>
<div class="t" style="right:612px;top:439.50px;font-size:13px;color:#333;font-weight:400;">3 500,00</div>
<div class="t" style="right:138px;top:439.50px;font-size:13px;color:#333;font-weight:400;letter-spacing:-0.2px;">Воронцова Ирина</div>
<svg style="position:absolute;left:1068px;top:431px;" width="19" height="17" viewBox="0 0 19 17"><g fill="#3a3a3a"><circle cx="5.4" cy="2.9" r="2.4"/><path d="M0.9 10.6 C1.3 8.6 2.6 7.3 4.8 7.3 H7.9 L5.9 10.6 Z"/><path d="M5.4 15.6 L6.3 12.2 L8.8 14.7 Z"/><path d="M6.9 11.6 L9.4 14.1 L14 9.5 L11.5 7 Z"/><path d="M12.2 6.3 L14.7 8.8 L17.1 6.4 L14.6 3.9 Z"/></g></svg>
<div class="t" style="right:26px;top:439.50px;font-size:13px;color:#333;font-weight:400;">4 000,00</div>
<div style="position:absolute;left:14px;top:454px;width:87px;height:28px;box-sizing:border-box;background:#f4f4e0"></div>
<div style="position:absolute;left:101px;top:454px;width:92px;height:28px;box-sizing:border-box;background:#ffffff"></div>
<div style="position:absolute;left:193px;top:454px;width:74px;height:28px;box-sizing:border-box;background:#ffffff"></div>
<div style="position:absolute;left:267px;top:454px;width:68px;height:28px;box-sizing:border-box;background:#ffffff"></div>
<div style="position:absolute;left:335px;top:454px;width:172px;height:28px;box-sizing:border-box;background:#f4f4e0"></div>
<div style="position:absolute;left:507px;top:454px;width:79px;height:28px;box-sizing:border-box;background:#f4f4e0"></div>
<div style="position:absolute;left:586px;top:454px;width:125px;height:28px;box-sizing:border-box;background:#f4f4e0"></div>
<div style="position:absolute;left:711px;top:454px;width:124px;height:28px;box-sizing:border-box;background:#f4f4e0"></div>
<div style="position:absolute;left:835px;top:454px;width:226px;height:28px;box-sizing:border-box;background:#f4f4e0"></div>
<div style="position:absolute;left:1061px;top:454px;width:107px;height:28px;box-sizing:border-box;background:#ffffff"></div>
<div style="position:absolute;left:14px;top:482px;width:1154px;height:1px;box-sizing:border-box;background:#e3e3e3"></div>
<div class="t" style="left:23px;top:468.50px;font-size:13px;color:#333;font-weight:400;">20.11.2025</div>
<div class="t" style="left:342px;top:468.50px;font-size:13px;color:#333;font-weight:400;">Прайс продаж — 2 уро…</div>
<div class="t" style="right:612px;top:468.50px;font-size:13px;color:#333;font-weight:400;">3 500,00</div>
<div class="t" style="right:138px;top:468.50px;font-size:13px;color:#333;font-weight:400;letter-spacing:-0.2px;">Воронцова Ирина</div>
<svg style="position:absolute;left:1068px;top:460px;" width="19" height="17" viewBox="0 0 19 17"><g fill="#3a3a3a"><circle cx="5.4" cy="2.9" r="2.4"/><path d="M0.9 10.6 C1.3 8.6 2.6 7.3 4.8 7.3 H7.9 L5.9 10.6 Z"/><path d="M5.4 15.6 L6.3 12.2 L8.8 14.7 Z"/><path d="M6.9 11.6 L9.4 14.1 L14 9.5 L11.5 7 Z"/><path d="M12.2 6.3 L14.7 8.8 L17.1 6.4 L14.6 3.9 Z"/></g></svg>
<div class="t" style="right:26px;top:468.50px;font-size:13px;color:#333;font-weight:400;">4 000,00</div>
<div style="position:absolute;left:14px;top:483px;width:87px;height:28px;box-sizing:border-box;background:#f4f4e0"></div>
<div style="position:absolute;left:101px;top:483px;width:92px;height:28px;box-sizing:border-box;background:#ffffff"></div>
<div style="position:absolute;left:193px;top:483px;width:74px;height:28px;box-sizing:border-box;background:#ffffff"></div>
<div style="position:absolute;left:267px;top:483px;width:68px;height:28px;box-sizing:border-box;background:#ffffff"></div>
<div style="position:absolute;left:335px;top:483px;width:172px;height:28px;box-sizing:border-box;background:#f4f4e0"></div>
<div style="position:absolute;left:507px;top:483px;width:79px;height:28px;box-sizing:border-box;background:#f4f4e0"></div>
<div style="position:absolute;left:586px;top:483px;width:125px;height:28px;box-sizing:border-box;background:#f4f4e0"></div>
<div style="position:absolute;left:711px;top:483px;width:124px;height:28px;box-sizing:border-box;background:#f4f4e0"></div>
<div style="position:absolute;left:835px;top:483px;width:226px;height:28px;box-sizing:border-box;background:#f4f4e0"></div>
<div style="position:absolute;left:1061px;top:483px;width:107px;height:28px;box-sizing:border-box;background:#ffffff"></div>
<div style="position:absolute;left:14px;top:511px;width:1154px;height:1px;box-sizing:border-box;background:#e3e3e3"></div>
<div class="t" style="left:23px;top:497.50px;font-size:13px;color:#333;font-weight:400;">21.11.2025</div>
<div class="t" style="left:342px;top:497.50px;font-size:13px;color:#333;font-weight:400;">Прайс продаж — 2 уро…</div>
<div class="t" style="right:612px;top:497.50px;font-size:13px;color:#333;font-weight:400;">3 500,00</div>
<div class="t" style="right:138px;top:497.50px;font-size:13px;color:#333;font-weight:400;letter-spacing:-0.2px;">Воронцова Ирина</div>
<svg style="position:absolute;left:1068px;top:489px;" width="19" height="17" viewBox="0 0 19 17"><g fill="#3a3a3a"><circle cx="5.4" cy="2.9" r="2.4"/><path d="M0.9 10.6 C1.3 8.6 2.6 7.3 4.8 7.3 H7.9 L5.9 10.6 Z"/><path d="M5.4 15.6 L6.3 12.2 L8.8 14.7 Z"/><path d="M6.9 11.6 L9.4 14.1 L14 9.5 L11.5 7 Z"/><path d="M12.2 6.3 L14.7 8.8 L17.1 6.4 L14.6 3.9 Z"/></g></svg>
<div class="t" style="right:26px;top:497.50px;font-size:13px;color:#333;font-weight:400;">4 000,00</div>
<div style="position:absolute;left:14px;top:512px;width:87px;height:28px;box-sizing:border-box;background:#f4f4e0"></div>
<div style="position:absolute;left:101px;top:512px;width:92px;height:28px;box-sizing:border-box;background:#ffffff"></div>
<div style="position:absolute;left:193px;top:512px;width:74px;height:28px;box-sizing:border-box;background:#ffffff"></div>
<div style="position:absolute;left:267px;top:512px;width:68px;height:28px;box-sizing:border-box;background:#ffffff"></div>
<div style="position:absolute;left:335px;top:512px;width:172px;height:28px;box-sizing:border-box;background:#f4f4e0"></div>
<div style="position:absolute;left:507px;top:512px;width:79px;height:28px;box-sizing:border-box;background:#f4f4e0"></div>
<div style="position:absolute;left:586px;top:512px;width:125px;height:28px;box-sizing:border-box;background:#f4f4e0"></div>
<div style="position:absolute;left:711px;top:512px;width:124px;height:28px;box-sizing:border-box;background:#f4f4e0"></div>
<div style="position:absolute;left:835px;top:512px;width:226px;height:28px;box-sizing:border-box;background:#f4f4e0"></div>
<div style="position:absolute;left:1061px;top:512px;width:107px;height:28px;box-sizing:border-box;background:#ffffff"></div>
<div style="position:absolute;left:14px;top:540px;width:1154px;height:1px;box-sizing:border-box;background:#e3e3e3"></div>
<div class="t" style="left:23px;top:526.50px;font-size:13px;color:#333;font-weight:400;">22.11.2025</div>
<div class="t" style="left:342px;top:526.50px;font-size:13px;color:#333;font-weight:400;">Прайс продаж — 2 уро…</div>
<div class="t" style="right:612px;top:526.50px;font-size:13px;color:#333;font-weight:400;">3 500,00</div>
<div class="t" style="right:138px;top:526.50px;font-size:13px;color:#333;font-weight:400;letter-spacing:-0.2px;">Воронцова Ирина</div>
<svg style="position:absolute;left:1068px;top:518px;" width="19" height="17" viewBox="0 0 19 17"><g fill="#3a3a3a"><circle cx="5.4" cy="2.9" r="2.4"/><path d="M0.9 10.6 C1.3 8.6 2.6 7.3 4.8 7.3 H7.9 L5.9 10.6 Z"/><path d="M5.4 15.6 L6.3 12.2 L8.8 14.7 Z"/><path d="M6.9 11.6 L9.4 14.1 L14 9.5 L11.5 7 Z"/><path d="M12.2 6.3 L14.7 8.8 L17.1 6.4 L14.6 3.9 Z"/></g></svg>
<div class="t" style="right:26px;top:526.50px;font-size:13px;color:#333;font-weight:400;">4 000,00</div>
<div style="position:absolute;left:14px;top:541px;width:87px;height:28px;box-sizing:border-box;background:#f4f4e0"></div>
<div style="position:absolute;left:101px;top:541px;width:92px;height:28px;box-sizing:border-box;background:#ffffff"></div>
<div style="position:absolute;left:193px;top:541px;width:74px;height:28px;box-sizing:border-box;background:#ffffff"></div>
<div style="position:absolute;left:267px;top:541px;width:68px;height:28px;box-sizing:border-box;background:#ffffff"></div>
<div style="position:absolute;left:335px;top:541px;width:172px;height:28px;box-sizing:border-box;background:#f4f4e0"></div>
<div style="position:absolute;left:507px;top:541px;width:79px;height:28px;box-sizing:border-box;background:#f4f4e0"></div>
<div style="position:absolute;left:586px;top:541px;width:125px;height:28px;box-sizing:border-box;background:#f4f4e0"></div>
<div style="position:absolute;left:711px;top:541px;width:124px;height:28px;box-sizing:border-box;background:#f4f4e0"></div>
<div style="position:absolute;left:835px;top:541px;width:226px;height:28px;box-sizing:border-box;background:#f4f4e0"></div>
<div style="position:absolute;left:1061px;top:541px;width:107px;height:28px;box-sizing:border-box;background:#ffffff"></div>
<div style="position:absolute;left:14px;top:569px;width:1154px;height:1px;box-sizing:border-box;background:#e3e3e3"></div>
<div class="t" style="left:23px;top:555.50px;font-size:13px;color:#333;font-weight:400;">23.11.2025</div>
<div class="t" style="left:342px;top:555.50px;font-size:13px;color:#333;font-weight:400;">Прайс продаж — 2 уро…</div>
<div class="t" style="right:612px;top:555.50px;font-size:13px;color:#333;font-weight:400;">3 500,00</div>
<div class="t" style="right:138px;top:555.50px;font-size:13px;color:#333;font-weight:400;letter-spacing:-0.2px;">Воронцова Ирина</div>
<svg style="position:absolute;left:1068px;top:547px;" width="19" height="17" viewBox="0 0 19 17"><g fill="#3a3a3a"><circle cx="5.4" cy="2.9" r="2.4"/><path d="M0.9 10.6 C1.3 8.6 2.6 7.3 4.8 7.3 H7.9 L5.9 10.6 Z"/><path d="M5.4 15.6 L6.3 12.2 L8.8 14.7 Z"/><path d="M6.9 11.6 L9.4 14.1 L14 9.5 L11.5 7 Z"/><path d="M12.2 6.3 L14.7 8.8 L17.1 6.4 L14.6 3.9 Z"/></g></svg>
<div class="t" style="right:26px;top:555.50px;font-size:13px;color:#333;font-weight:400;">4 000,00</div>
<div style="position:absolute;left:14px;top:580px;width:1154px;height:1px;box-sizing:border-box;background:#c9c9c9"></div>
<div style="position:absolute;left:14px;top:581px;width:1154px;height:29px;box-sizing:border-box;background:#f2f2f2"></div>
<div style="position:absolute;left:100px;top:581px;width:1px;height:30px;box-sizing:border-box;background:#d4d4d4"></div>
<div style="position:absolute;left:101px;top:581px;width:1px;height:30px;box-sizing:border-box;background:#fbfbfb"></div>
<div style="position:absolute;left:192px;top:581px;width:1px;height:30px;box-sizing:border-box;background:#d4d4d4"></div>
<div style="position:absolute;left:193px;top:581px;width:1px;height:30px;box-sizing:border-box;background:#fbfbfb"></div>
<div style="position:absolute;left:266px;top:581px;width:1px;height:30px;box-sizing:border-box;background:#d4d4d4"></div>
<div style="position:absolute;left:267px;top:581px;width:1px;height:30px;box-sizing:border-box;background:#fbfbfb"></div>
<div style="position:absolute;left:334px;top:581px;width:1px;height:30px;box-sizing:border-box;background:#d4d4d4"></div>
<div style="position:absolute;left:335px;top:581px;width:1px;height:30px;box-sizing:border-box;background:#fbfbfb"></div>
<div style="position:absolute;left:506px;top:581px;width:1px;height:30px;box-sizing:border-box;background:#d4d4d4"></div>
<div style="position:absolute;left:507px;top:581px;width:1px;height:30px;box-sizing:border-box;background:#fbfbfb"></div>
<div style="position:absolute;left:585px;top:581px;width:1px;height:30px;box-sizing:border-box;background:#d4d4d4"></div>
<div style="position:absolute;left:586px;top:581px;width:1px;height:30px;box-sizing:border-box;background:#fbfbfb"></div>
<div style="position:absolute;left:710px;top:581px;width:1px;height:30px;box-sizing:border-box;background:#d4d4d4"></div>
<div style="position:absolute;left:711px;top:581px;width:1px;height:30px;box-sizing:border-box;background:#fbfbfb"></div>
<div style="position:absolute;left:834px;top:581px;width:1px;height:30px;box-sizing:border-box;background:#d4d4d4"></div>
<div style="position:absolute;left:835px;top:581px;width:1px;height:30px;box-sizing:border-box;background:#fbfbfb"></div>
<div style="position:absolute;left:1060px;top:581px;width:1px;height:30px;box-sizing:border-box;background:#d4d4d4"></div>
<div style="position:absolute;left:1061px;top:581px;width:1px;height:30px;box-sizing:border-box;background:#fbfbfb"></div>
<div class="t" style="right:612px;top:595.50px;font-size:13px;color:#4d4d4d;font-weight:700;">24 500,00</div>
<div class="t" style="right:25px;top:595.50px;font-size:13px;color:#4d4d4d;font-weight:700;">28 000,00</div>
<div style="position:absolute;left:37px;top:614px;width:1109px;height:9px;box-sizing:border-box;border-radius:5px;background:#9b9b9b"></div>
<svg style="position:absolute;left:23px;top:615px;" width="5" height="7" viewBox="0 0 5 7"><path d="M4 0.5 V6.5 L0.5 3.5 Z" fill="#c0c0c0"/></svg>
<svg style="position:absolute;left:1155px;top:614px;" width="6" height="8" viewBox="0 0 6 8"><path d="M1 0 V8 L5.5 4 Z" fill="#333"/></svg>
<div class="t" style="left:14px;top:645.54px;font-size:15.75px;color:#1a9646;font-weight:400;text-decoration:underline;text-decoration-skip-ink:none;text-underline-offset:1.5px;">Стоимость до операции (35 000,00)</div>
<svg style="position:absolute;left:13px;top:659px;" width="1156" height="1" viewBox="0 0 1156 1"><path d="M0 0.5 H1156" stroke="#cdcdcd" stroke-width="1" stroke-dasharray="4 2"/></svg>
<div style="position:absolute;left:13px;top:664px;width:1156px;height:74px;box-sizing:border-box;border:1px solid #a9a9a9;border-radius:3px;background:#fff"></div>
<div class="t" style="left:17px;top:675.84px;font-size:12px;color:#b5b5b5;font-weight:400;">Описание</div>
<svg style="position:absolute;left:0px;top:0px;pointer-events:none;" width="1189" height="751" viewBox="0 0 1189 751"><g fill="none" stroke="#ff0000" stroke-width="3"><rect x="890.5" y="274" width="142" height="58" rx="6"/><rect x="102.5" y="336.5" width="232" height="234" rx="5.5"/></g><path d="M1019 324 L1068 361" stroke="#ff0000" stroke-width="3.3"/><path d="M1087 377 L1061.5 367 L1071 355.5 Z" fill="#ff0000"/></svg>
</body></html>
